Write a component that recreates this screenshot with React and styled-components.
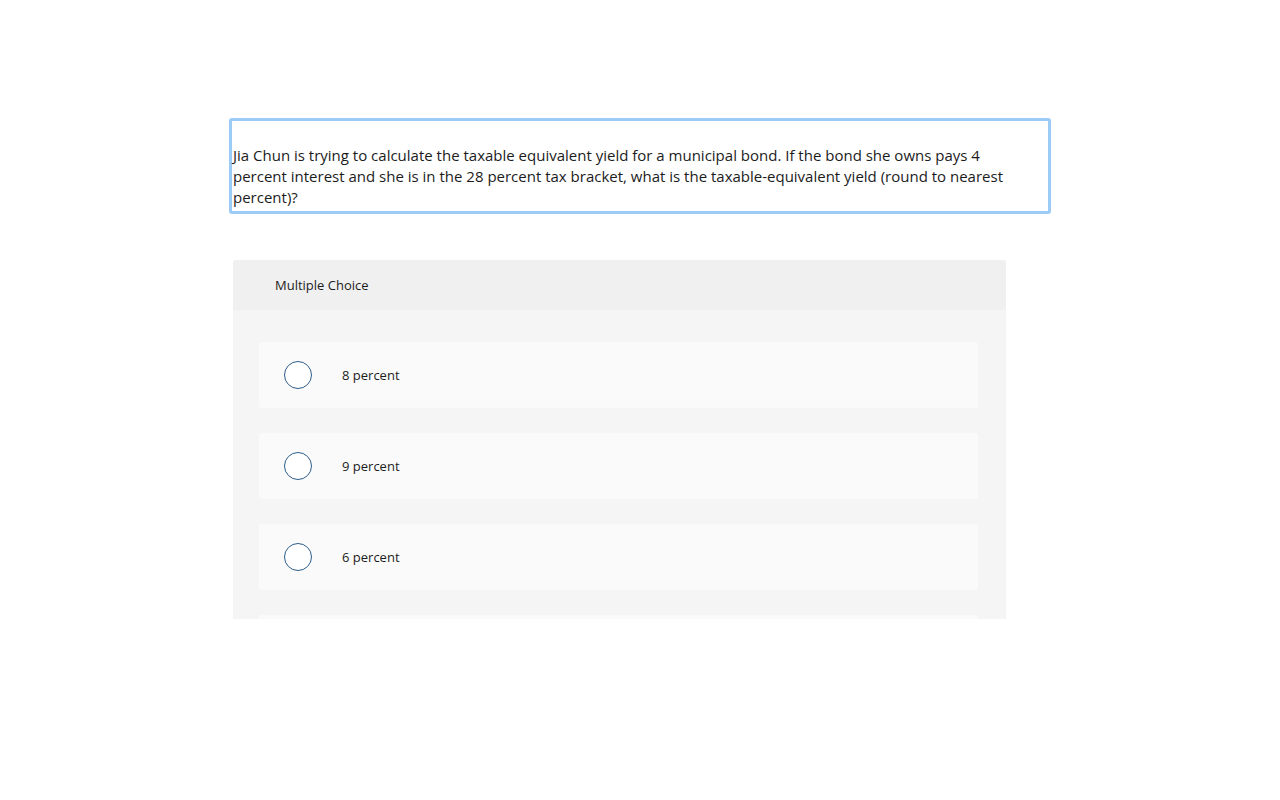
import React from "react";
import styled, { createGlobalStyle } from "styled-components";

const GlobalStyle = createGlobalStyle`
  body {
    margin: 0;
    background: #ffffff;
    font-family: "Open Sans", "Liberation Sans", Arial, sans-serif;
    color: #1a1a1a;
  }
`

const Page = styled.div`
  width: 1280px;
  height: 800px;
  padding: 118px 0 0 229px;
  box-sizing: border-box;
`

const QuestionBox = styled.div`
  width: 822px;
  box-sizing: border-box;
  border: 3px solid #9ccbf6;
  border-radius: 3px;
  padding: 24px 4px 3px 1px;
  font-size: 15px;
  line-height: 21px;
  color: #1c1c1c;
`

const ChoicePanel = styled.div`
  width: 773px;
  height: 359px;
  margin: 46px 0 0 4px;
  background: #f5f5f5;
  border-radius: 3px 3px 0 0;
  overflow: hidden;
`

const ChoiceHeader = styled.div`
  height: 50px;
  display: flex;
  align-items: center;
  padding-left: 42px;
  background: #f0f0f0;
  font-size: 13px;
  color: #1c1c1c;
`

const ChoiceList = styled.div`
  display: flex;
  flex-direction: column;
  gap: 25px;
  padding: 32px 28px 0 26px;
`

const ChoiceRow = styled.label`
  height: 66px;
  display: flex;
  align-items: center;
  gap: 30px;
  padding-left: 25px;
  background: #fafafa;
  border-radius: 3px;
  font-size: 13px;
  color: #1c1c1c;
  flex-shrink: 0;
`

const Radio = styled.span`
  width: 26px;
  height: 26px;
  border: 1px solid #2d5c8b;
  border-radius: 50%;
  background: #ffffff;
  flex-shrink: 0;
`

const choices = ["8 percent", "9 percent", "6 percent"];

function App() {
  return (
    <Page>
      <GlobalStyle />
      <QuestionBox>
        Jia Chun is trying to calculate the taxable equivalent yield for a municipal bond. If the bond she owns pays 4<br />
        percent interest and she is in the 28 percent tax bracket, what is the taxable-equivalent yield (round to nearest<br />
        percent)?
      </QuestionBox>
      <ChoicePanel>
        <ChoiceHeader>Multiple Choice</ChoiceHeader>
        <ChoiceList>
          {choices.map((c) => (
            <ChoiceRow key={c}>
              <Radio />
              {c}
            </ChoiceRow>
          ))}
          {/* next option, scrolled below the panel's edge */}
          <ChoiceRow />
        </ChoiceList>
      </ChoicePanel>
    </Page>
  )
}

export default App;
